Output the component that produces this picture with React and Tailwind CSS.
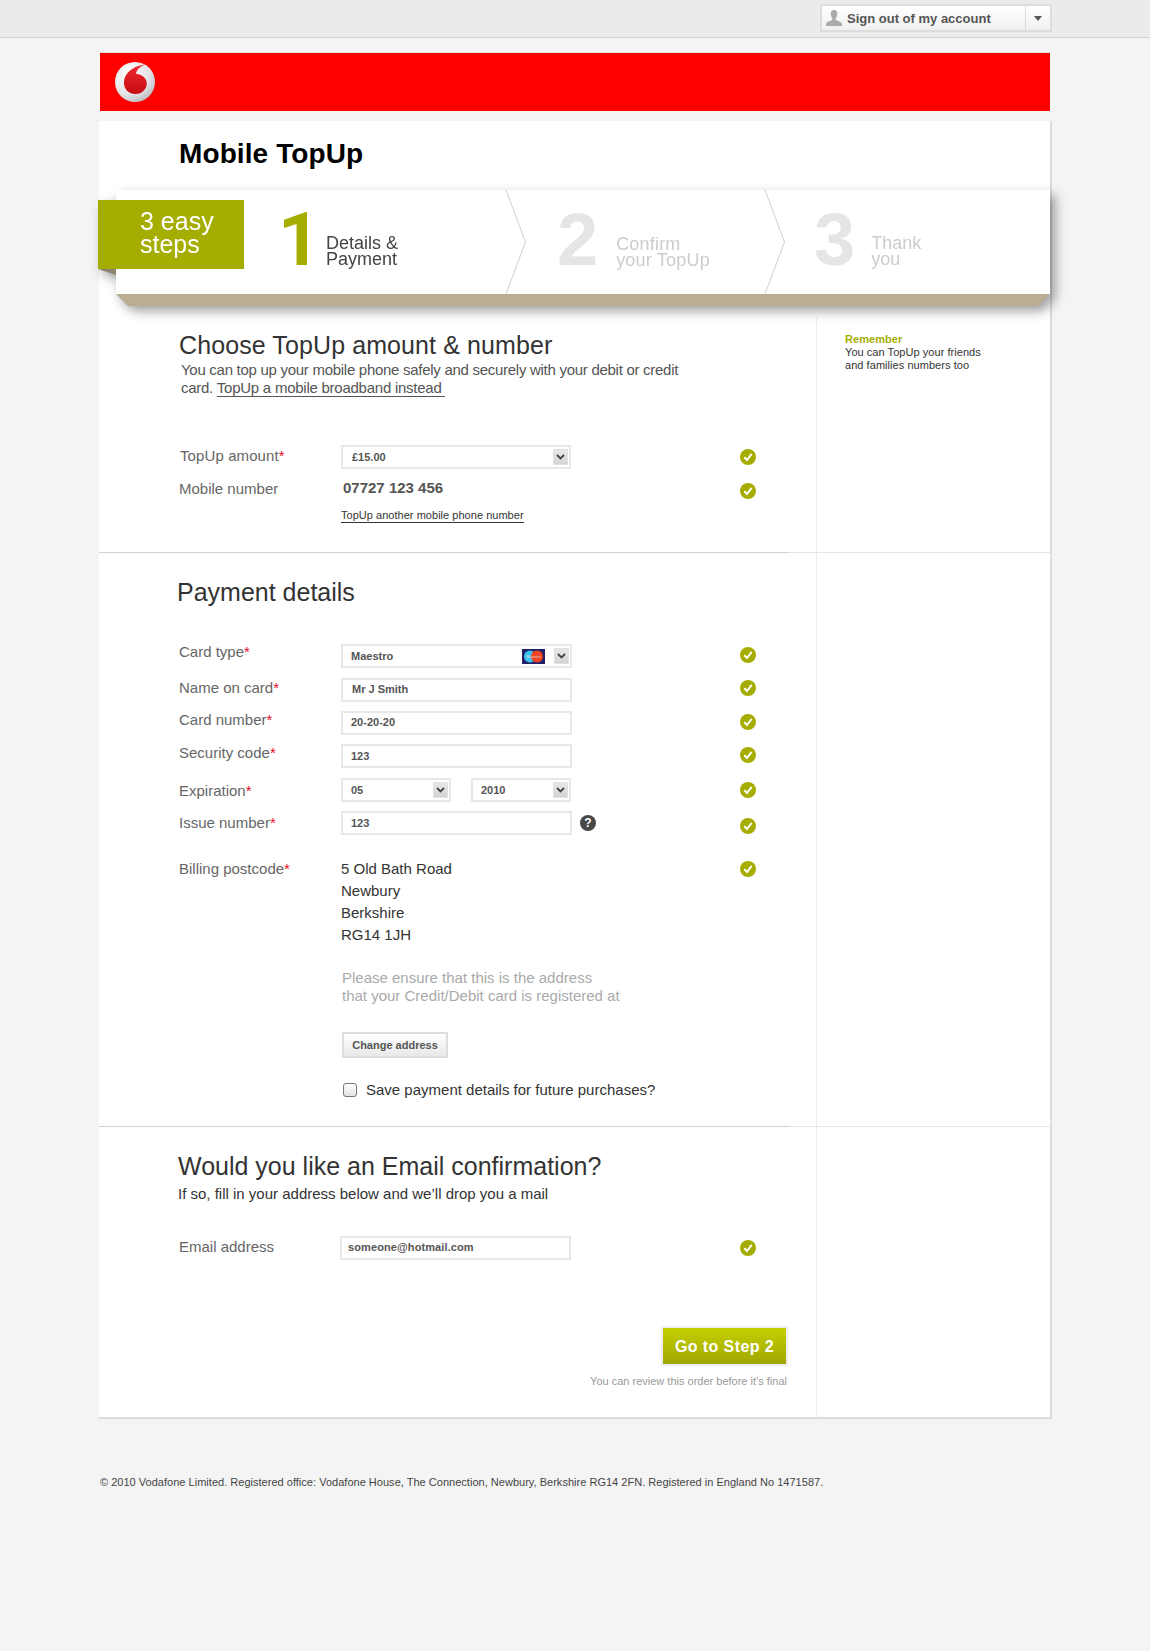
import React from 'react';

const CheckIcon = () => (
  <svg width="16" height="16" viewBox="0 0 16 16" className="block">
    <circle cx="8" cy="8" r="8" fill="#a5ad00" />
    <path d="M4.3 8.2 L7 11 L11.7 4.9" fill="none" stroke="#fff" strokeWidth="2" />
  </svg>
);

const SelectArrow = () => (
  <span className="w-[15px] h-4 bg-gradient-to-b from-[#e8e8e8] to-[#d4d4d4] border border-[#e0e0e0] rounded-[1px] flex items-center justify-center">
    <svg width="9" height="6" viewBox="0 0 9 6">
      <path d="M1 1 L4.5 4.5 L8 1" fill="none" stroke="#444" strokeWidth="1.8" />
    </svg>
  </span>
);

const MaestroBadge = () => (
  <svg width="23" height="15" viewBox="0 0 23 15" className="block">
    <rect width="23" height="15" fill="#23206b" />
    <circle cx="8" cy="7.5" r="6" fill="#3cc4f2" />
    <circle cx="15" cy="7.5" r="6" fill="#ee4423" />
    <text x="11.5" y="9" textAnchor="middle" fontSize="4" fill="#f3d6d6" fontFamily="Liberation Sans">Maestro</text>
  </svg>
);

const Logo = () => (
  <svg width="40" height="40" viewBox="0 0 40 40" className="block">
    <defs>
      <radialGradient id="silver" cx="0.35" cy="0.3" r="0.85">
        <stop offset="0" stopColor="#ffffff" />
        <stop offset="0.6" stopColor="#e4e4e8" />
        <stop offset="1" stopColor="#adaeb6" />
      </radialGradient>
      <linearGradient id="redmark" x1="0" y1="0" x2="0" y2="1">
        <stop offset="0" stopColor="#ee2a2f" />
        <stop offset="1" stopColor="#c60c12" />
      </linearGradient>
    </defs>
    <circle cx="20" cy="20" r="20" fill="url(#silver)" />
    <path d="M30 2.5 C20 3.5 9 10 9 21 C9 27.5 14 32 20.5 32 C27 32 31.8 27 31.8 21.5 C31.8 16 27 12.5 21 11.8 C21.5 7.5 26 4 30 2.5 Z" fill="url(#redmark)" />
  </svg>
);

const Chevron = () => (
  <svg width="22" height="104" viewBox="0 0 22 104" className="absolute top-0 right-[-21px]">
    <path d="M1 0 L20.5 52 L1 104" fill="none" stroke="#cfcfcf" strokeWidth="1" />
  </svg>
);

const Req = () => <span className="text-[#e8102a]">*</span>;

function Row({ height, label, required, labelClass, checkClass, children }) {
  return (
    <div className={`flex items-start ${height}`}>
      <div className={`w-[161px] shrink-0 -ml-[1px] mr-[1px] text-[15px] leading-[18px] text-[#666] ${labelClass}`}>
        {label}{required && <Req />}
      </div>
      <div className="w-[399px] shrink-0">{children}</div>
      <div className={checkClass}><CheckIcon /></div>
    </div>
  );
}

function Field({ value, width = 'w-[231px]', select, badge, pad = 'pl-[8px]', textClass = '' }) {
  return (
    <div className={`${width} h-6 bg-white border-2 border-[#e8e8e8] flex items-center justify-between ${pad} pr-[1px]`}>
      <span className={`text-[11px] leading-none font-bold text-[#555] ${textClass}`}>{value}</span>
      {select && (
        <span className="flex items-center gap-[9px]">
          {badge && <MaestroBadge />}
          <SelectArrow />
        </span>
      )}
    </div>
  );
}

function Divider() {
  return (
    <div className="flex h-px">
      <div className="w-[691px] bg-[#d2d2d2]" />
      <div className="flex-1 bg-[#e6e6e6]" />
    </div>
  );
}

function Section({ height, side, children }) {
  return (
    <div className={`flex ${height}`}>
      <div className="w-[717px] shrink-0">{children}</div>
      <div className="flex-1 border-l border-[#ececec] pl-[28px]">{side}</div>
    </div>
  );
}

export default function App() {
  return (
    <div className="min-h-[1651px] bg-[#f4f4f4] font-['Liberation_Sans',Arial,sans-serif]">
      {/* top bar */}
      <div className="h-[38px] bg-[#ebebeb] border-b border-[#d4d4d4] flex justify-end pr-[98px] pt-1">
        <div className="w-[232px] h-[28px] bg-white border-2 border-[#dcdcdc] flex bg-gradient-to-b from-white to-[#f0f0f0]">
          <div className="flex-1 flex items-center pl-1 gap-[5px]">
            <svg width="16" height="16" viewBox="0 0 16 16">
              <path d="M8 0 C10.5 0 11.5 2 11.3 4.3 C11.1 6.3 10.3 7.8 9.6 8.6 L9.6 10 C11.5 11 15.5 11.5 16 14 L16 16 L0 16 L0 14 C0.5 11.5 4.5 11 6.4 10 L6.4 8.6 C5.7 7.8 4.9 6.3 4.7 4.3 C4.5 2 5.5 0 8 0 Z" fill="#aaa" />
            </svg>
            <span className="pt-[2px] text-[13px] font-bold text-[#555]">Sign out of my account</span>
          </div>
          <div className="w-[25px] border-l border-[#ddd] flex items-center justify-center">
            <span className="border-x-[4px] border-x-transparent border-t-[5px] border-t-[#555]" />
          </div>
        </div>
      </div>

      {/* red banner */}
      <div className="ml-[100px] w-[950px] mt-[14px] h-[59px] border-t border-[#ddd] bg-[#fe0000] flex items-center pl-[15px]">
        <Logo />
      </div>

      {/* card */}
      <div className="ml-[99px] w-[953px] mt-[10px] h-[1298px] bg-white border-r-2 border-b-2 border-[#dcdcdc]">
        <h1 className="ml-[80px] pt-[16px] text-[28px] leading-[34px] font-bold tracking-[0.1px] text-black">Mobile TopUp</h1>

        {/* steps */}
        <div className="relative mt-[19px] ml-[17px] w-[934px] drop-shadow-[5px_5px_6px_rgba(0,0,0,0.38)]">
          <div className="flex h-[104px] bg-white">
            <div className="relative w-[390px] pl-[162px] pt-[13px] flex items-start">
              <span className="w-[39px] text-[74px] leading-[74px] font-bold font-['Roboto',sans-serif] text-[#a5ad00]">1</span>
              <div className="ml-[9px] mt-[32px] text-[18px] leading-[16px] text-[#444]">Details &amp;<br />Payment</div>
              <Chevron />
            </div>
            <div className="relative w-[259px] pl-[51px] pt-[13px] flex items-start">
              <span className="text-[74px] leading-[74px] font-bold text-[#e4e5e6]">2</span>
              <div className="ml-[18px] mt-[33px] text-[18px] leading-[16px] tracking-[0.2px] text-[#ccc]">Confirm<br />your TopUp</div>
              <Chevron />
            </div>
            <div className="flex-1 pl-[49px] pt-[13px] flex items-start">
              <span className="text-[74px] leading-[74px] font-bold text-[#e4e5e6]">3</span>
              <div className="ml-[16px] mt-[32px] text-[18px] leading-[16px] text-[#ccc]">Thank<br />you</div>
            </div>
          </div>
          <div className="h-3 bg-[#b9ae94] [clip-path:polygon(0_0,100%_0,calc(100%-12px)_100%,12px_100%)]" />

          {/* flag */}
          <div className="absolute left-[-18px] top-[10px] w-[146px] h-[69px] bg-[#a5ad00] pl-[42px] pt-[10px] text-[25px] leading-[23px] text-white">3 easy<br />steps</div>
          <div className="absolute left-[-18px] top-[79px] w-[18px] h-[6px] bg-[#8d8370] [clip-path:polygon(0_0,100%_0,100%_100%)]" />
        </div>

        <div className="h-[11px]" />

        {/* amount and number */}
        <Section
          height="h-[235px]"
          side={
            <div className="pt-[16px] text-[11px] leading-[13px] tracking-[0.05px] text-[#333]">
              <div className="font-bold text-[#a5ad00]">Remember</div>
              You can TopUp your friends<br />and families numbers too
            </div>
          }
        >
          <div className="pl-[81px] pt-[13px]">
            <h2 className="-ml-[1px] text-[25px] leading-[30px] tracking-[0.1px] text-[#333]">Choose TopUp amount &amp; number</h2>
            <p className="ml-[1px] mt-[1px] text-[15px] leading-[18px] tracking-[-0.28px] text-[#555]">
              You can top up your mobile phone safely and securely with your debit or credit<br />
              card. <a className="border-b border-[#555] tracking-[-0.25px]">TopUp a mobile broadband instead&nbsp;</a>
            </p>
            <div className="mt-[48px]">
              <Row height="h-[33px]" label="TopUp amount" required labelClass="mt-[2px] pl-[1px] tracking-[0.1px]" checkClass="mt-[4px]">
                <Field value="£15.00" width="w-[230px]" pad="pl-[9px]" select />
              </Row>
              <Row height="h-[24px]" label="Mobile number" labelClass="mt-[2px]" checkClass="mt-[5px]">
                <div className="ml-[2px] pt-[1px] text-[15px] leading-[18px] font-bold text-[#555]">07727 123 456</div>
              </Row>
              <a className="ml-[161px] border-b border-[#333] text-[11px] leading-[13px] tracking-[0.03px] text-[#333] inline-block">TopUp another mobile phone number</a>
            </div>
          </div>
        </Section>
        <Divider />

        {/* payment */}
        <Section height="h-[573px]">
          <div className="pl-[81px] pt-[24px]">
            <h2 className="-ml-[3px] text-[25px] leading-[30px] text-[#333]">Payment details</h2>
            <div className="mt-[37px]">
              <Row height="h-[34px]" label="Card type" required labelClass="-mt-[1px]" checkClass="mt-[3px]">
                <Field value="Maestro" select badge />
              </Row>
              <Row height="h-[33px]" label="Name on card" required labelClass="mt-[1px]" checkClass="mt-[2px]">
                <Field value="Mr J Smith" pad="pl-[9px]" textClass="pb-[2px]" />
              </Row>
              <Row height="h-[33px]" label="Card number" required labelClass="mt-0" checkClass="mt-[3px]">
                <Field value="20-20-20" textClass="pb-[2px]" />
              </Row>
              <Row height="h-[34px]" label="Security code" required labelClass="mt-0" checkClass="mt-[3px]">
                <Field value="123" />
              </Row>
              <Row height="h-[33px]" label="Expiration" required labelClass="mt-[4px]" checkClass="mt-[4px]">
                <div className="flex gap-[20px]">
                  <Field value="05" width="w-[110px]" select />
                  <Field value="2010" width="w-[100px]" select />
                </div>
              </Row>
              <Row height="h-[49px]" label="Issue number" required labelClass="mt-[3px]" checkClass="mt-[7px]">
                <div className="flex items-center gap-2">
                  <Field value="123" />
                  <span className="w-4 h-4 rounded-full bg-[#484848] text-white text-[12px] leading-none font-bold flex items-center justify-center">?</span>
                </div>
              </Row>
              <Row height="h-[100px]" label="Billing postcode" required labelClass="mt-0" checkClass="mt-[1px]">
                <div className="text-[15px] leading-[22px] text-[#333] -mt-[2px]">
                  5 Old Bath Road<br />Newbury<br />Berkshire<br />RG14 1JH
                </div>
              </Row>
              <p className="ml-[162px] mt-[9px] text-[15px] leading-[18px] text-[#aaa]">
                Please ensure that this is the address<br />that your Credit/Debit card is registered at
              </p>
              <button className="block ml-[162px] mt-[27px] w-[106px] h-[26px] border-2 border-[#dcdcdc] bg-gradient-to-b from-white to-[#e8e8e8] text-[11px] font-bold text-[#555]">Change address</button>
              <label className="ml-[163px] mt-[23px] flex items-center gap-[9px] text-[15px] leading-[18px] text-[#333]">
                <span className="w-[14px] h-[14px] rounded-[3px] border border-[#777] bg-gradient-to-b from-white to-[#e2e2e2]" />
                Save payment details for future purchases?
              </label>
            </div>
          </div>
        </Section>
        <Divider />

        {/* email */}
        <Section height="h-[290px]">
          <div className="pl-[81px] pt-[24px]">
            <h2 className="-ml-[2px] text-[25px] leading-[30px] text-[#333]">Would you like an Email confirmation?</h2>
            <p className="-ml-[2px] mt-[4px] text-[15px] leading-[18px] text-[#333]">If so, fill in your address below and we’ll drop you a mail</p>
            <div className="mt-[33px]">
              <Row height="h-[24px]" label="Email address" labelClass="mt-[2px]" checkClass="mt-[4px]">
                <div className="-ml-[1px]"><Field value="someone@hotmail.com" pad="pl-[6px]" textClass="pb-[2px] tracking-[0.1px]" /></div>
              </Row>
            </div>
            <div className="mt-[66px] pr-[28px] flex flex-col items-end">
              <button className="w-[127px] h-10 pt-[1px] border-2 border-[#eee] bg-gradient-to-b from-[#c5d000] to-[#a0a600] text-[16px] font-bold tracking-[0.4px] text-white">Go to Step 2</button>
              <div className="mt-[8px] mr-[1px] text-[11px] leading-[14px] text-[#999]">You can review this order before it’s final</div>
            </div>
          </div>
        </Section>
      </div>

      <div className="ml-[100px] mt-[56px] text-[11px] leading-[14px] tracking-[0.02px] text-[#444]">
        © 2010 Vodafone Limited. Registered office: Vodafone House, The Connection, Newbury, Berkshire RG14 2FN. Registered in England No 1471587.
      </div>
    </div>
  );
}
